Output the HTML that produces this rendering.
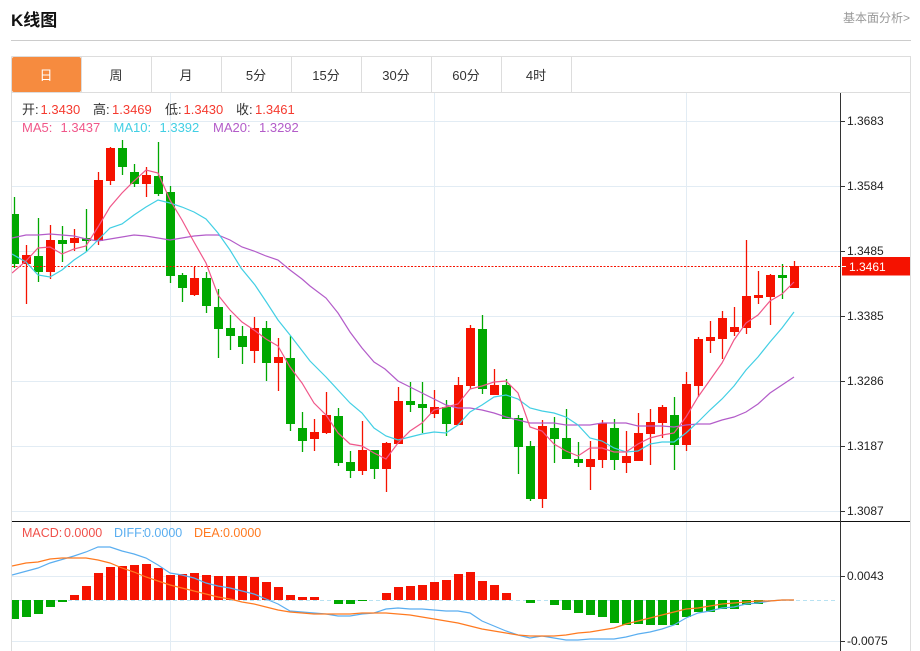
<!DOCTYPE html>
<html><head><meta charset="utf-8"><title>K线图</title>
<style>
html,body{margin:0;padding:0;background:#fff;width:920px;height:651px;overflow:hidden}
svg{display:block;position:absolute;left:0;top:0}
text{font-family:"Liberation Sans","Noto Sans CJK SC",sans-serif}
</style></head><body>
<svg width="920" height="651" viewBox="0 0 920 651" xmlns="http://www.w3.org/2000/svg">
<defs><clipPath id="c"><rect x="12" y="93" width="828" height="558"/></clipPath></defs>
<text x="11" y="26" font-size="17" font-weight="700" fill="#111">K线图</text>
<text x="843" y="22" font-size="12" fill="#999">基本面分析&gt;</text>
<path d="M11 40.5H911" stroke="#ccc" fill="none"/>
<path d="M11.5 56.5H910.5V651M11.5 56.5V651M12 92.5H910" stroke="#ddd" fill="none"/>
<rect x="12" y="57" width="69" height="35" rx="2" fill="#f68b3f"/>
<path d="M81.5 57V92M151.5 57V92M221.5 57V92M291.5 57V92M361.5 57V92M431.5 57V92M501.5 57V92M571.5 57V92" stroke="#ddd" fill="none"/>
<g font-size="13" fill="#333" text-anchor="middle">
<text x="46" y="80" fill="#fff">日</text><text x="116" y="80">周</text><text x="186" y="80">月</text><text x="256" y="80">5分</text><text x="326" y="80">15分</text><text x="396" y="80">30分</text><text x="466" y="80">60分</text><text x="536" y="80">4时</text>
</g>
<path d="M12 121.5H840M12 186.5H840M12 251.5H840M12 316.5H840M12 381.5H840M12 446.5H840M12 511.5H840M12 576.5H840M12 641.5H840M170.5 93V651M434.5 93V651M686.5 93V651" stroke="#e2ecf4" fill="none"/>
<g clip-path="url(#c)">
<path fill="none" stroke="#00a800" stroke-width="1.3" d="M14.5 197V268M38.5 218V282M62.5 226V262M86.5 209V252M122.5 140V175M134.5 164V187M158.5 142V196M170.5 186V283M182.5 273V302M206.5 272V313M218.5 289V358M230.5 315V350M242.5 326V364M266.5 321V381M290.5 336V431M302.5 412V452M338.5 408V466M350.5 451V478M374.5 450V479M410.5 382V412M422.5 382V433M446.5 400V436M482.5 315V394M506.5 379V419M518.5 415V474M530.5 441V501M554.5 417V463M566.5 409V459M578.5 442V467M614.5 419V470M674.5 397V470M782.5 264V299"/>
<path fill="#00a800" d="M10 214h9V264h-9zM34 256h9V272h-9zM58 240h9V244h-9zM82 238h9V241h-9zM118 148h9V167h-9zM130 172h9V184h-9zM154 176h9V194h-9zM166 192h9V276h-9zM178 275h9V288h-9zM202 278h9V306h-9zM214 307h9V329h-9zM226 328h9V336h-9zM238 336h9V347h-9zM262 328h9V363h-9zM286 358h9V424h-9zM298 428h9V441h-9zM334 416h9V463h-9zM346 462h9V471h-9zM370 450h9V469h-9zM406 401h9V405h-9zM418 404h9V408h-9zM442 407h9V424h-9zM478 329h9V389h-9zM502 385h9V419h-9zM514 418h9V447h-9zM526 446h9V499h-9zM550 428h9V439h-9zM562 438h9V459h-9zM574 459h9V463h-9zM610 428h9V460h-9zM670 415h9V445h-9zM778 275h9V278h-9z"/>
<path fill="none" stroke="#f51200" stroke-width="1.3" d="M26.5 245V304M50.5 225V279M74.5 229V251M98.5 172V245M110.5 147V185M146.5 167V197M194.5 267V296M254.5 317V363M278.5 338V391M314.5 419V451M326.5 392V434M362.5 421V475M386.5 442V492M398.5 387V444M434.5 390V418M458.5 377V425M470.5 325V389M494.5 369V395M542.5 420V508M590.5 441V490M602.5 420V468M626.5 431V473M638.5 413V461M650.5 409V465M662.5 405V438M686.5 372V451M698.5 337V397M710.5 321V353M722.5 311V359M734.5 307V336M746.5 240V334M758.5 271V304M770.5 274V325M794.5 261V288"/>
<path fill="#f51200" d="M22 255h9V264h-9zM46 240h9V272h-9zM70 238h9V243h-9zM94 180h9V241h-9zM106 148h9V181h-9zM142 175h9V184h-9zM190 278h9V295h-9zM250 328h9V351h-9zM274 357h9V363h-9zM310 432h9V439h-9zM322 415h9V433h-9zM358 450h9V471h-9zM382 443h9V469h-9zM394 401h9V444h-9zM430 407h9V414h-9zM454 385h9V425h-9zM466 328h9V386h-9zM490 385h9V395h-9zM538 426h9V499h-9zM586 459h9V467h-9zM598 423h9V460h-9zM622 456h9V463h-9zM634 433h9V461h-9zM646 422h9V434h-9zM658 407h9V423h-9zM682 384h9V445h-9zM694 339h9V386h-9zM706 337h9V341h-9zM718 318h9V339h-9zM730 327h9V332h-9zM742 296h9V328h-9zM754 295h9V298h-9zM766 275h9V297h-9zM790 266h9V288h-9z"/>
<path d="M12 266.5H840" stroke="#f51200" stroke-dasharray="2 1.5" fill="none"/>
<polyline fill="none" stroke="#b35cc9" stroke-width="1.2" points="12,238 26,235 38,235 50,234 62,235 74,236 86,239 98,241 110,239 122,237 134,235 146,236 158,238 170,240 182,238 194,236 206,235 218,235 230,240 242,247 254,251 266,256 278,260 290,270 302,279 310,286 326,298 338,313 350,332 362,348 374,362 385,369 398,381 410,387 422,393 434,399 446,405 458,408 470,408 482,410 494,413 506,417 518,420 530,423 542,423 554,423 566,425 578,425 590,425 602,423 614,423 626,423 638,426 650,426 662,426 674,427 686,425 698,424 710,424 722,420 734,417 746,412 758,404 770,393 782,385 794,377"/>
<polyline fill="none" stroke="#42cfe4" stroke-width="1.2" points="12,254 26,262 38,275 50,277 62,270 74,260 86,252 98,240 110,228 122,224 134,215 146,207 158,200 170,203 182,207 194,212 206,219 218,233 230,250 241,268 255,285 267,303 278,320 290,335 310,361 326,377 338,390 350,403 362,413 374,428 386,436 398,440 410,437 422,434 434,432 446,433 458,425 470,412 482,405 494,397 506,395 518,399 530,408 542,411 554,413 566,417 578,425 590,438 602,441 614,448 626,452 638,451 650,444 662,442 674,442 686,433 698,422 710,410 722,399 734,386 746,370 758,357 770,342 782,328 794,312"/>
<polyline fill="none" stroke="#f0578a" stroke-width="1.2" points="12,273 26,261 38,248 50,247 62,254 74,249 86,246 98,227 110,207 122,193 134,181 146,170 158,173 170,200 182,220 194,242 206,263 218,295 230,310 242,322 254,330 266,339 278,346 290,367 302,383 314,403 326,415 338,433 350,444 362,446 374,453 386,459 398,443 410,431 422,423 434,410 446,407 458,404 470,389 482,386 494,382 506,381 518,393 530,427 542,431 554,444 566,451 578,456 590,448 602,448 614,452 626,452 638,444 650,438 662,435 674,433 686,417 698,397 710,380 722,363 734,340 746,323 758,315 770,301 782,294 794,282"/>
<path d="M12 600.5H838" stroke="#b8e2f2" stroke-dasharray="4 3" fill="none"/>
<path fill="#00a800" d="M10 600h9V619h-9zM22 600h9V617h-9zM34 600h9V614h-9zM46 600h9V607h-9zM58 600h9V602h-9zM334 600h9V604h-9zM346 600h9V604h-9zM358 600h9V601h-9zM526 600h9V603h-9zM550 600h9V605h-9zM562 600h9V610h-9zM574 600h9V613h-9zM586 600h9V615h-9zM598 600h9V617h-9zM610 600h9V623h-9zM622 600h9V625h-9zM634 600h9V624h-9zM646 600h9V625h-9zM658 600h9V625h-9zM670 600h9V625h-9zM682 600h9V617h-9zM694 600h9V612h-9zM706 600h9V612h-9zM718 600h9V609h-9zM730 600h9V609h-9zM742 600h9V605h-9zM754 600h9V604h-9z"/>
<path fill="#f51200" d="M70 595h9V600h-9zM82 586h9V600h-9zM94 573h9V600h-9zM106 567h9V600h-9zM118 566h9V600h-9zM130 565h9V600h-9zM142 564h9V600h-9zM154 568h9V600h-9zM166 575h9V600h-9zM178 574h9V600h-9zM190 573h9V600h-9zM202 575h9V600h-9zM214 576h9V600h-9zM226 576h9V600h-9zM238 576h9V600h-9zM250 577h9V600h-9zM262 582h9V600h-9zM274 587h9V600h-9zM286 595h9V600h-9zM298 597h9V600h-9zM310 597h9V600h-9zM382 593h9V600h-9zM394 587h9V600h-9zM406 586h9V600h-9zM418 585h9V600h-9zM430 582h9V600h-9zM442 580h9V600h-9zM454 574h9V600h-9zM466 572h9V600h-9zM478 581h9V600h-9zM490 585h9V600h-9zM502 593h9V600h-9z"/>
<polyline fill="none" stroke="#5aaef0" stroke-width="1.2" points="12,575 38,568 50,563 74,556 86,552 98,547 110,547 122,551 134,554 146,558 158,565 170,573 182,575 194,578 206,583 218,586 230,588 242,591 254,594 266,599 278,604 290,611 302,612 314,613 326,614 338,616 350,616 362,614 374,613 386,609 398,608 410,609 422,609 434,610 446,611 458,611 470,613 482,621 494,626 506,631 518,635 530,638 542,636 554,638 566,640 578,640 590,639 602,639 614,639 626,637 638,634 650,632 662,629 674,625 686,618 698,613 710,611 722,608 734,607 746,604 758,603 770,601 782,600 794,600"/>
<polyline fill="none" stroke="#ff7a20" stroke-width="1.2" points="12,566 26,563 38,562 50,559 62,558 74,558 86,558 98,560 110,563 122,568 134,572 146,577 158,581 170,585 182,588 194,591 206,594 218,597 230,599 242,602 254,604 266,607 278,610 290,612 302,613 314,614 326,614 338,614 350,614 362,613 374,613 386,613 398,614 410,615 422,617 434,619 446,621 458,623 470,626 482,629 494,631 506,633 518,635 530,636 542,636 554,636 566,635 578,633 590,632 602,630 614,628 626,624 638,621 650,618 662,615 674,612 686,609 698,608 710,606 722,604 734,603 746,602 758,601 770,601 782,600 794,600"/>
</g>
<path d="M12 521.5H910" stroke="#111" fill="none"/>
<path d="M840.5 93V651" stroke="#333" fill="none"/>
<path d="M841 121.5h4M841 186.5h4M841 251.5h4M841 316.5h4M841 381.5h4M841 446.5h4M841 511.5h4M841 576.5h4M841 641.5h4" stroke="#333" fill="none"/>
<g font-size="12" fill="#222">
<text x="847" y="125">1.3683</text><text x="847" y="190">1.3584</text><text x="847" y="255">1.3485</text><text x="847" y="320">1.3385</text><text x="847" y="385">1.3286</text><text x="847" y="450">1.3187</text><text x="847" y="515">1.3087</text><text x="847" y="580">0.0043</text><text x="847" y="645">-0.0075</text>
</g>
<rect x="842" y="257" width="68" height="18.5" fill="#f51200"/>
<path d="M842 266.5h4" stroke="#fff" fill="none"/>
<text x="849" y="271" font-size="12" fill="#fff">1.3461</text>
<g font-size="13">
<text x="22" y="114" fill="#333">开:</text><text x="40.5" y="114" fill="#f53a2f">1.3430</text>
<text x="93" y="114" fill="#333">高:</text><text x="112" y="114" fill="#f53a2f">1.3469</text>
<text x="165" y="114" fill="#333">低:</text><text x="183.5" y="114" fill="#f53a2f">1.3430</text>
<text x="236" y="114" fill="#333">收:</text><text x="255" y="114" fill="#f53a2f">1.3461</text>
<text x="22" y="132" fill="#f0578a">MA5:</text><text x="60.5" y="132" fill="#f0578a">1.3437</text>
<text x="113.5" y="132" fill="#42cfe4">MA10:</text><text x="159.5" y="132" fill="#42cfe4">1.3392</text>
<text x="213" y="132" fill="#b35cc9">MA20:</text><text x="259" y="132" fill="#b35cc9">1.3292</text>
</g>
<g font-size="12.5">
<text x="22" y="537" fill="#f0504a">MACD:</text><text x="64" y="537" fill="#f0504a">0.0000</text>
<text x="114" y="537" fill="#5aaef0">DIFF:</text><text x="144" y="537" fill="#5aaef0">0.0000</text>
<text x="194" y="537" fill="#ff7a20">DEA:</text><text x="223" y="537" fill="#ff7a20">0.0000</text>
</g>
</svg>
</body></html>
